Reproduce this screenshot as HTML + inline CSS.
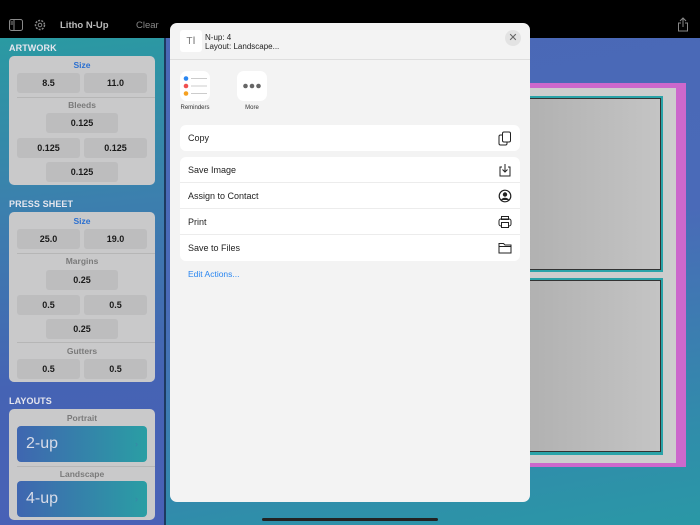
<!DOCTYPE html>
<html><head><style>
*{margin:0;padding:0;box-sizing:border-box}
body{width:700px;height:525px;overflow:hidden;position:relative;font-family:"Liberation Sans",sans-serif;background:#000}
.abs{position:absolute}
#side{left:0;top:38px;width:164px;height:487px;background:linear-gradient(175deg,#2a9aa2 0%,#3c7fae 35%,#4563b4 70%,#4961b6 100%)}
#main{left:166px;top:38px;width:534px;height:487px;background:linear-gradient(170deg,#4a68b6 0%,#4a6ab8 45%,#2f8eaa 85%,#2a98a6 100%)}
.hdr{position:absolute;left:9px;font-size:9px;color:#e6e6ee;font-weight:bold;letter-spacing:0.1px}
.card{position:absolute;left:9px;width:146px;background:#c9c9ca;border-radius:5px}
.lbl{position:absolute;left:0;width:146px;text-align:center;font-size:8.5px;color:#7a7a7a;font-weight:bold}
.blue{color:#2a6fd0}
.btn{position:absolute;height:20px;background:#bdbdbe;border-radius:3px;font-size:9px;font-weight:bold;color:#1a1a1a;text-align:center;line-height:20px}
.l{left:8px;width:63px}.r{left:75px;width:63px}.c{left:37px;width:72px}
.div{position:absolute;left:8px;right:0;height:1px;background:#b6b6b6}
.lay{position:absolute;left:8px;width:130px;height:36px;border-radius:4px;background:linear-gradient(90deg,#3f66b0,#2a9ea4);color:#d8dce8;font-size:16px;line-height:36px;padding-left:9px}
.lay span{position:absolute;right:9px;font-size:9px;color:#3a86a8}
#sheet{left:170px;top:23px;width:360px;height:479px;background:#f3f3f3;border-radius:7px}
.row{position:absolute;left:10px;width:340px;height:26px;background:#fff;font-size:9px;color:#222;line-height:27px;padding-left:8px}
.row svg{position:absolute;right:8px;top:6px}
</style></head><body>
<div class="abs" style="left:0;top:0;width:700px;height:38px;background:#000"></div>
<svg class="abs" style="left:9px;top:19px" width="14" height="12"><rect x="0.5" y="0.5" width="13" height="11" rx="2" fill="none" stroke="#8a8a8a"/><line x1="5" y1="1" x2="5" y2="11" stroke="#8a8a8a"/><line x1="1.5" y1="3" x2="4" y2="3" stroke="#8a8a8a"/><line x1="1.5" y1="5" x2="4" y2="5" stroke="#8a8a8a"/></svg>
<svg class="abs" style="left:34px;top:19px" width="12" height="12"><circle cx="6" cy="6" r="4.5" fill="none" stroke="#8a8a8a" stroke-width="1.5" stroke-dasharray="2 1.2"/><circle cx="6" cy="6" r="1.8" fill="none" stroke="#8a8a8a"/></svg>
<div class="abs" style="left:60px;top:20px;font-size:9.5px;color:#bbb;font-weight:bold">Litho N-Up</div>
<div class="abs" style="left:136px;top:20px;font-size:9.5px;color:#888">Clear</div>
<svg class="abs" style="left:677px;top:17px" width="12" height="15"><path d="M6 1v9M3 4l3-3 3 3M4 6H1.5v8h9V6H8" fill="none" stroke="#888" stroke-width="1"/></svg>
<div id="side" class="abs"></div>
<div class="abs" style="left:164px;top:38px;width:2px;height:487px;background:#1d3a60"></div>
<div id="main" class="abs"></div>
<div class="abs" style="left:520px;top:83px;width:166px;height:384px;background:#cc68cc"></div>
<div class="abs" style="left:520px;top:88px;width:156px;height:375px;background:#cdcdcd"></div>
<div class="abs" style="left:520px;top:96px;width:143px;height:176px;background:#2aa3a8"></div>
<div class="abs" style="left:520px;top:98px;width:141px;height:172px;background:linear-gradient(90deg,#b0b0b0,#c4c4c4);border:1px solid #333"></div>
<div class="abs" style="left:520px;top:278px;width:143px;height:177px;background:#2aa3a8"></div>
<div class="abs" style="left:520px;top:280px;width:141px;height:172px;background:linear-gradient(90deg,#b0b0b0,#c4c4c4);border:1px solid #333"></div>
<div class="abs" style="left:262px;top:518px;width:176px;height:3px;border-radius:2px;background:#222"></div>

<div class="hdr" style="top:43px">ARTWORK</div>
<div class="card" style="top:56px;height:129px">
 <div class="lbl blue" style="top:4px">Size</div>
 <div class="btn l" style="top:17px">8.5</div><div class="btn r" style="top:17px">11.0</div>
 <div class="div" style="top:41px"></div>
 <div class="lbl" style="top:44px">Bleeds</div>
 <div class="btn c" style="top:57px">0.125</div>
 <div class="btn l" style="top:82px">0.125</div><div class="btn r" style="top:82px">0.125</div>
 <div class="btn c" style="top:106px">0.125</div>
</div>
<div class="hdr" style="top:199px">PRESS SHEET</div>
<div class="card" style="top:212px;height:170px">
 <div class="lbl blue" style="top:4px">Size</div>
 <div class="btn l" style="top:17px">25.0</div><div class="btn r" style="top:17px">19.0</div>
 <div class="div" style="top:41px"></div>
 <div class="lbl" style="top:44px">Margins</div>
 <div class="btn c" style="top:58px">0.25</div>
 <div class="btn l" style="top:83px">0.5</div><div class="btn r" style="top:83px">0.5</div>
 <div class="btn c" style="top:107px">0.25</div>
 <div class="div" style="top:130px"></div>
 <div class="lbl" style="top:134px">Gutters</div>
 <div class="btn l" style="top:147px">0.5</div><div class="btn r" style="top:147px">0.5</div>
</div>
<div class="hdr" style="top:396px">LAYOUTS</div>
<div class="card" style="top:409px;height:111px">
 <div class="lbl" style="top:4px">Portrait</div>
 <div class="lay" style="top:17px">2-up<span>›</span></div>
 <div class="div" style="top:57px"></div>
 <div class="lbl" style="top:60px">Landscape</div>
 <div class="lay" style="top:72px">4-up<span>›</span></div>
</div>

<div id="sheet" class="abs">
 <div class="abs" style="left:10px;top:7px;width:22px;height:22px;background:#fff;border-radius:3px;font-size:10px;color:#777;text-align:center;line-height:22px">T<span style="font-size:11px">I</span></div>
 <div class="abs" style="left:35px;top:10px;font-size:8px;color:#222;line-height:9px">N-up: 4<br>Layout: Landscape...</div>
 <div class="abs" style="left:335px;top:7px;width:16px;height:16px;border-radius:8px;background:#e3e3e3;color:#666;font-size:11px;text-align:center;line-height:16px">✕</div>
 <div class="abs" style="left:0;top:36px;width:360px;height:1px;background:#dedede"></div>
 <div class="abs" style="left:10px;top:48px;width:30px;height:30px;background:#fff;border-radius:7px">
  <svg width="30" height="30"><circle cx="6" cy="7.5" r="2.3" fill="#2a86f0"/><circle cx="6" cy="15" r="2.3" fill="#f05050"/><circle cx="6" cy="22.5" r="2.3" fill="#f5a020"/><g stroke="#ccc"><line x1="11" y1="7.5" x2="27" y2="7.5"/><line x1="11" y1="15" x2="27" y2="15"/><line x1="11" y1="22.5" x2="27" y2="22.5"/></g></svg>
 </div>
 <div class="abs" style="left:3px;top:82px;width:44px;text-align:center;font-size:6px;color:#333">Reminders</div>
 <div class="abs" style="left:67px;top:48px;width:30px;height:30px;background:#fff;border-radius:7px"><svg width="30" height="30"><circle cx="8.5" cy="15" r="2.3" fill="#666"/><circle cx="15" cy="15" r="2.3" fill="#666"/><circle cx="21.5" cy="15" r="2.3" fill="#666"/></svg></div>
 <div class="abs" style="left:67px;top:82px;width:30px;text-align:center;font-size:6px;color:#333">More</div>
 <div class="row" style="top:102px;border-radius:6px">Copy<svg width="14" height="15"><rect x="1" y="4" width="8" height="10" rx="1.5" fill="#fff" stroke="#222"/><rect x="4.5" y="1" width="8" height="10" rx="1.5" fill="#fff" stroke="#222"/></svg></div>
 <div class="row" style="top:134px;border-radius:6px 6px 0 0">Save Image<svg width="14" height="14"><path d="M4 4H2v9h10V4h-2M7 1v8M4.5 6.5 7 9l2.5-2.5" fill="none" stroke="#222"/></svg></div>
 <div class="row" style="top:160px">Assign to Contact<svg width="14" height="14"><circle cx="7" cy="7" r="5.8" fill="none" stroke="#222" stroke-width="1.2"/><circle cx="7" cy="5.5" r="2.2" fill="#222"/><path d="M3 11c1-3 7-3 8 0" fill="#222"/></svg></div>
 <div class="row" style="top:186px">Print<svg width="14" height="14"><rect x="1" y="4" width="12" height="7" rx="2" fill="none" stroke="#222"/><rect x="3.5" y="1.5" width="7" height="3" fill="none" stroke="#222"/><rect x="3.5" y="7.5" width="7" height="5" fill="#fff" stroke="#222"/></svg></div>
 <div class="row" style="top:212px;border-radius:0 0 6px 6px">Save to Files<svg width="14" height="14"><path d="M1 2.5h4.5l1.5 1.5h6v8H1z M1 5.5h12" fill="none" stroke="#222"/></svg></div>
 <div class="abs" style="left:18px;top:246px;font-size:8.5px;color:#2a86f0">Edit Actions...</div>
</div>
<div class="abs" style="left:180px;top:182px;width:340px;height:1px;background:#ececec"></div>
<div class="abs" style="left:180px;top:208px;width:340px;height:1px;background:#ececec"></div>
<div class="abs" style="left:180px;top:234px;width:340px;height:1px;background:#ececec"></div>
</body></html>
